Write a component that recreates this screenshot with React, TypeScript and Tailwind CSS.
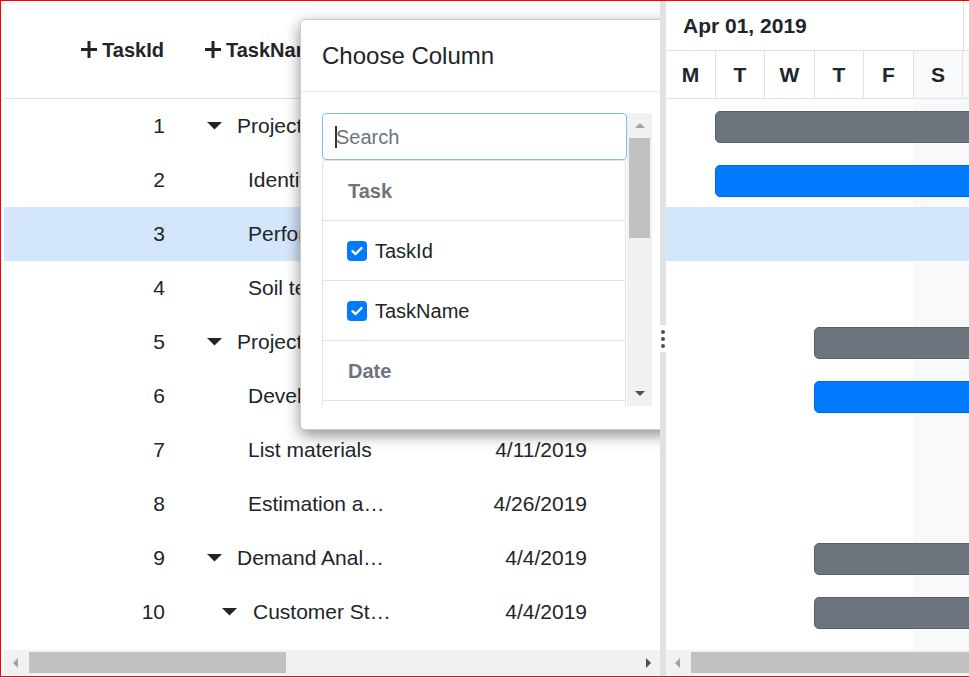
import React from "react";

type Row = {
  id: number;
  name: string;
  date: string;
  kind: "p0" | "leaf" | "p1";
  bar?: "gray" | "blue";
  late?: boolean;
};

const rows: Row[] = [
  { id: 1, name: "Project initiation", date: "4/2/2019", kind: "p0", bar: "gray" },
  { id: 2, name: "Identify site location", date: "4/2/2019", kind: "leaf", bar: "blue" },
  { id: 3, name: "Perform soil test", date: "4/2/2019", kind: "leaf" },
  { id: 4, name: "Soil test approval", date: "4/2/2019", kind: "leaf" },
  { id: 5, name: "Project estimation", date: "4/4/2019", kind: "p0", bar: "gray", late: true },
  { id: 6, name: "Develop floor plan for estimation", date: "4/4/2019", kind: "leaf", bar: "blue", late: true },
  { id: 7, name: "List materials", date: "4/11/2019", kind: "leaf" },
  { id: 8, name: "Estimation approval", date: "4/26/2019", kind: "leaf" },
  { id: 9, name: "Demand Analysis", date: "4/4/2019", kind: "p0", bar: "gray", late: true },
  { id: 10, name: "Customer Strength", date: "4/4/2019", kind: "p1", bar: "gray", late: true },
];

const days = [
  { d: "M", w: "w-[50px]", we: false },
  { d: "T", w: "w-[49px]", we: false },
  { d: "W", w: "w-[50px]", we: false },
  { d: "T", w: "w-[49px]", we: false },
  { d: "F", w: "w-[50px]", we: false },
  { d: "S", w: "w-[49px]", we: true },
  { d: "S", w: "w-[50px]", we: true },
];

function Plus() {
  return (
    <svg width="16" height="17" viewBox="0 0 16 17" className="shrink-0 mr-[5px]">
      <rect x="6.5" y="0" width="3" height="17" fill="#212529" />
      <rect x="0" y="7" width="16" height="3" fill="#212529" />
    </svg>
  );
}

function Caret() {
  return (
    <svg width="15" height="8" viewBox="0 0 15 8" className="shrink-0">
      <polygon points="0,0 15,0 7.5,7.5" fill="#212529" />
    </svg>
  );
}

function Check() {
  return (
    <div className="w-[20px] h-[20px] rounded-[4px] bg-[#007bff] flex items-center justify-center shrink-0">
      <svg width="12" height="10" viewBox="0 0 12 10">
        <path d="M1.5 5.2 L4.6 8 L10.5 2" stroke="#fff" strokeWidth="2.4" fill="none" strokeLinecap="round" strokeLinejoin="round" />
      </svg>
    </div>
  );
}

function HScroll({ thumb }: { thumb: string }) {
  return (
    <div className="h-[25px] mb-[1px] shrink-0 bg-[#f1f1f1] flex items-center">
      <div className="w-[23px] h-full flex items-center justify-center shrink-0">
        <span className="w-0 h-0 border-y-[5px] border-y-transparent border-r-[5px] border-r-[#a3a3a3]" />
      </div>
      <div className={`${thumb} h-[21px] ml-[2px] bg-[#c1c1c1] shrink-0`} />
      <div className="flex-1" />
      <div className="w-[23px] h-full flex items-center justify-center shrink-0">
        <span className="w-0 h-0 border-y-[5px] border-y-transparent border-l-[5px] border-l-[#505050]" />
      </div>
    </div>
  );
}

function ChooseColumn() {
  return (
    <div className="absolute left-[299px] top-[18px] w-[376px] h-[411px] bg-white border border-[rgba(0,0,0,0.2)] rounded-[5px] shadow-[0_5px_15px_rgba(0,0,0,0.45)] flex flex-col">
      <div className="h-[72px] shrink-0 border-b border-[#e9ecef] flex items-center pl-[21px] text-[24px]">
        Choose Column
      </div>
      <div className="pt-[21px] pl-[21px]">
        <div className="flex h-[293px] w-[330px]">
          <div className="w-[305px] overflow-hidden flex flex-col">
            <div className="h-[47px] shrink-0 border border-[#80bdff] rounded-[4px] flex items-center pl-[12px] text-[20px] text-[#6c757d]">
              <span className="w-[2px] h-[22px] bg-[#333] -mr-[1px]" />
              Search
            </div>
            <div className="h-[61px] shrink-0 w-[304px] border border-[#dee2e6] rounded-t-[4px] flex items-center pl-[25px] text-[20px] font-bold text-[#6c757d]">
              Task
            </div>
            <div className="h-[60px] shrink-0 w-[304px] border-x border-b border-[#dee2e6] flex items-center pl-[24px] text-[20px]">
              <Check />
              <span className="ml-[8px]">TaskId</span>
            </div>
            <div className="h-[60px] shrink-0 w-[304px] border-x border-b border-[#dee2e6] flex items-center pl-[24px] text-[20px]">
              <Check />
              <span className="ml-[8px]">TaskName</span>
            </div>
            <div className="h-[60px] shrink-0 w-[304px] border-x border-b border-[#dee2e6] flex items-center pl-[25px] text-[20px] font-bold text-[#6c757d]">
              Date
            </div>
            <div className="h-[60px] shrink-0 w-[304px] border-x border-b border-[#dee2e6] flex items-center pl-[24px] text-[20px]">
              <Check />
              <span className="ml-[8px]">StartDate</span>
            </div>
          </div>
          <div className="w-[25px] bg-[#f1f1f1] flex flex-col items-center">
            <div className="h-[25px] w-full flex items-center justify-center">
              <span className="w-0 h-0 border-x-[5px] border-x-transparent border-b-[5px] border-b-[#a3a3a3]" />
            </div>
            <div className="w-[21px] h-[100px] bg-[#c1c1c1]" />
            <div className="flex-1" />
            <div className="h-[25px] w-full flex items-center justify-center">
              <span className="w-0 h-0 border-x-[5px] border-x-transparent border-t-[5px] border-t-[#505050]" />
            </div>
          </div>
        </div>
      </div>
    </div>
  );
}

function GridPane() {
  return (
    <div className="relative w-[659px] shrink-0 pl-[3px] flex flex-col overflow-hidden">
      <div className="h-[98px] shrink-0 border-b border-[#dee2e6] flex items-center text-[20px] font-bold">
        <div className="w-[177px] flex items-center justify-end pr-[17px]">
          <Plus />
          TaskId
        </div>
        <div className="w-[225px] flex items-center pl-[24px]">
          <Plus />
          TaskName
        </div>
        <div className="w-[195px] flex items-center justify-end pr-[14px]">
          <Plus />
          StartDate
        </div>
      </div>
      {rows.map((r) => (
        <div
          key={r.id}
          className={`h-[54px] shrink-0 flex items-center text-[21px] ${r.id === 3 ? "bg-[#d4e6fb]" : ""}`}
        >
          <div className="w-[177px] text-right pr-[16px]">{r.id}</div>
          <div className="w-[225px] pl-[26px] pr-[14px] flex items-center min-w-0">
            {r.kind === "p0" && (
              <>
                <Caret />
                <span className="ml-[15px] truncate">{r.name}</span>
              </>
            )}
            {r.kind === "leaf" && <span className="ml-[41px] truncate">{r.name}</span>}
            {r.kind === "p1" && (
              <>
                <span className="ml-[15px] flex">
                  <Caret />
                </span>
                <span className="ml-[16px] truncate">{r.name}</span>
              </>
            )}
          </div>
          <div className="w-[195px] text-right pr-[14px]">{r.date}</div>
        </div>
      ))}
      <div className="flex-1" />
      <HScroll thumb="w-[257px]" />
      <ChooseColumn />
    </div>
  );
}

function Splitter() {
  return (
    <div className="w-[6px] shrink-0 bg-[#dee2e6] flex flex-col justify-center">
      <div className="h-[27px] bg-white flex flex-col items-center justify-center gap-[3px]">
        <span className="w-[4px] h-[4px] rounded-full bg-[#495057]" />
        <span className="w-[4px] h-[4px] rounded-full bg-[#495057]" />
        <span className="w-[4px] h-[4px] rounded-full bg-[#495057]" />
      </div>
    </div>
  );
}

function ChartPane() {
  return (
    <div className="flex-1 min-w-0 overflow-hidden flex flex-col">
      <div className="h-[50px] shrink-0 border-b border-[#dee2e6] flex">
        <div className="w-[298px] shrink-0 border-r border-[#dee2e6] pl-[17px] flex items-center text-[21px] font-bold">
          Apr 01, 2019
        </div>
        <div className="w-[350px] shrink-0" />
      </div>
      <div className="h-[48px] shrink-0 border-b border-[#dee2e6] flex">
        {days.map((d, i) => (
          <div
            key={i}
            className={`${d.w} shrink-0 border-r border-[#dee2e6] flex items-center justify-center text-[21px] font-bold ${d.we ? "bg-[#f8f9fa]" : ""}`}
          >
            {d.d}
          </div>
        ))}
      </div>
      <div className="relative flex-1 flex flex-col">
        <div className="absolute left-[247px] top-0 bottom-0 w-[200px] bg-[#f8f9fa]" />
        {rows.map((r) => (
          <div
            key={r.id}
            className={`relative h-[54px] shrink-0 flex ${r.id === 3 ? "bg-[#d4e6fb]" : ""}`}
          >
            {r.bar && (
              <div
                className={`h-[32px] mt-[12px] w-[500px] shrink-0 rounded-[5px] border ${r.late ? "ml-[148px]" : "ml-[49px]"} ${
                  r.bar === "gray" ? "bg-[#6c757d] border-[#5a6268]" : "bg-[#007bff] border-[#0069d9]"
                }`}
              />
            )}
          </div>
        ))}
      </div>
      <HScroll thumb="w-[400px]" />
    </div>
  );
}

export default function App() {
  return (
    <div className="w-[969px] h-[677px] border-t border-l border-b border-[#ff0000] flex bg-white font-['Liberation_Sans',Arial,sans-serif] text-[#212529] overflow-hidden">
      <GridPane />
      <Splitter />
      <ChartPane />
    </div>
  );
}
